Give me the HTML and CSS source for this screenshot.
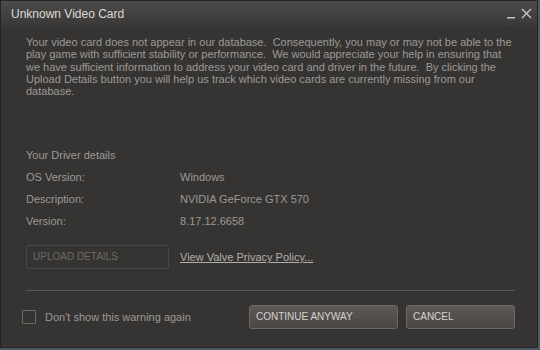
FILE: index.html
```html
<!DOCTYPE html>
<html>
<head>
<meta charset="utf-8">
<link rel="stylesheet" href="styles.css">
</head>
<body>
<div class="window">
  <div class="titlebar">
    <span class="title">Unknown Video Card</span>
    <div class="controls">
      <svg width="9" height="10" viewBox="0 0 9 10"><rect x="0" y="8" width="8" height="1.5" fill="#c8c6c4"/></svg>
      <svg width="11" height="11" viewBox="0 0 11 11"><path d="M1 1 L10 10 M10 1 L1 10" stroke="#c8c6c4" stroke-width="1.4"/></svg>
    </div>
  </div>
  <div class="content">
    <p class="message">Your video card does not appear in our database.&nbsp; Consequently, you may or may not be able to the play game with sufficient stability or performance.&nbsp; We would appreciate your help in ensuring that we have sufficient information to address your video card and driver in the future.&nbsp; By clicking the Upload Details button you will help us track which video cards are currently missing from our database.</p>
    <div class="details">
      <div class="heading">Your Driver details</div>
      <div class="row"><span class="label">OS Version:</span><span class="value">Windows</span></div>
      <div class="row"><span class="label">Description:</span><span class="value">NVIDIA GeForce GTX 570</span></div>
      <div class="row"><span class="label">Version:</span><span class="value">8.17.12.6658</span></div>
    </div>
    <div class="upload-row">
      <div class="btn-upload">UPLOAD DETAILS</div>
      <a class="link">View Valve Privacy Policy...</a>
    </div>
    <div class="separator"></div>
    <div class="footer">
      <label class="check"><span class="box"></span><span>Don't show this warning again</span></label>
      <div class="buttons">
        <div class="btn btn-continue">CONTINUE ANYWAY</div>
        <div class="btn btn-cancel">CANCEL</div>
      </div>
    </div>
  </div>
</div>
</body>
</html>
```
FILE: styles.css
```css
html, body {
  margin: 0;
  padding: 0;
  background: #4b5866;
  width: 540px;
  height: 350px;
  overflow: hidden;
}
body {
  font-family: "Liberation Sans", Arial, sans-serif;
}
.window {
  width: 538px;
  height: 348px;
  background: #363432;
  box-sizing: border-box;
  border: 1px solid #262524;
  display: flex;
  flex-direction: column;
}
.titlebar {
  height: 26px;
  flex: none;
  background: linear-gradient(#4d4b49, #3a3836);
  display: flex;
  align-items: center;
  justify-content: space-between;
  padding: 0 5px 0 10px;
}
.title {
  color: #dcdad8;
  font-size: 12px;
}
.controls {
  display: flex;
  align-items: center;
  gap: 5px;
  margin-top: -1px;
}
.content {
  padding: 9px 22px 0 25px;
  color: #9d9995;
  font-size: 11px;
}
.message {
  margin: 0;
  line-height: 12.3px;
  font-size: 11px;
}
.details {
  margin-top: 51px;
}
.heading {
  height: 22px;
  line-height: 14px;
}
.row {
  display: flex;
  height: 22px;
  line-height: 14px;
}
.label {
  width: 154px;
}
.upload-row {
  display: flex;
  align-items: center;
  margin-top: 9px;
}
.btn-upload {
  width: 143px;
  height: 24px;
  box-sizing: border-box;
  border: 1px solid #4b4946;
  border-radius: 3px;
  color: #6e6b67;
  font-size: 10px;
  line-height: 22px;
  padding-left: 6px;
}
.link {
  margin-left: 11px;
  color: #b3afab;
  text-decoration: underline;
  font-size: 11px;
}
.separator {
  height: 1px;
  background: #5a5754;
  margin-top: 21px;
}
.footer {
  display: flex;
  align-items: center;
  justify-content: space-between;
  margin-top: 14px;
  margin-left: -4px;
}
.check {
  display: flex;
  align-items: center;
  gap: 9px;
  font-size: 11px;
  color: #9d9995;
}
.box {
  width: 14px;
  height: 14px;
  box-sizing: border-box;
  border: 1px solid #6e6a66;
  border-radius: 1px;
}
.buttons {
  display: flex;
  gap: 8px;
}
.btn {
  height: 24px;
  box-sizing: border-box;
  border: 1px solid #6c6966;
  border-radius: 3px;
  background: linear-gradient(#5d5956, #4a4643);
  color: #d6d2ce;
  font-size: 10px;
  line-height: 22px;
  padding-left: 6px;
}
.btn-continue { width: 149px; }
.btn-cancel { width: 109px; }
```
